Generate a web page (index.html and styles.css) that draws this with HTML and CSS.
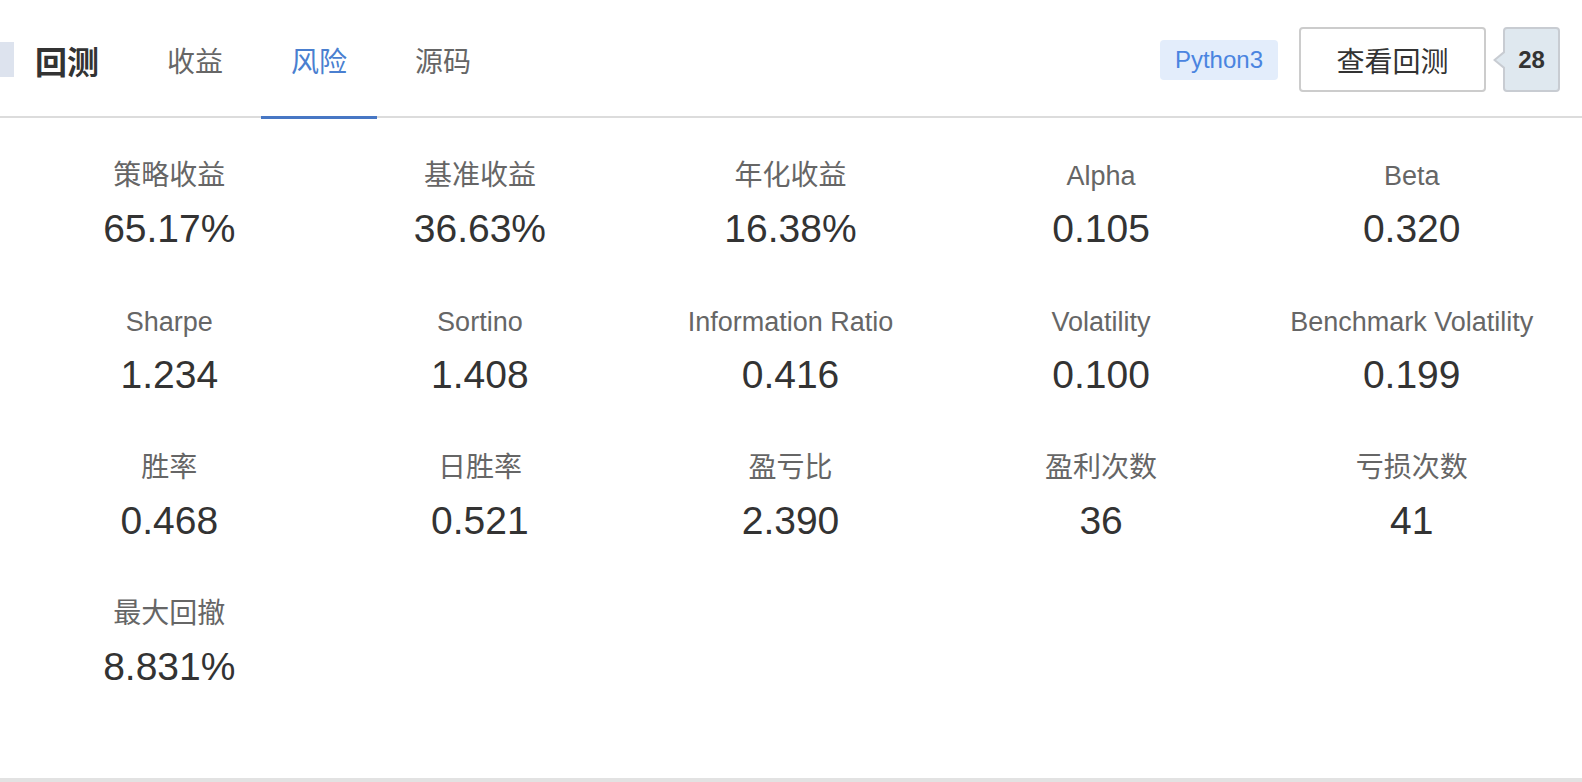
FILE: index.html
```html
<!DOCTYPE html>
<html lang="zh-CN">
<head>
<meta charset="utf-8">
<title>回测 - 风险</title>
<link rel="stylesheet" href="styles.css">
</head>
<body>
<div class="page">
  <header class="header">
    <div class="brand">
      <span class="brand-mark"></span>
      <h1 class="brand-title">回测</h1>
    </div>
    <nav class="tabs">
      <a class="tab">收益</a>
      <a class="tab tab-active">风险</a>
      <a class="tab">源码</a>
    </nav>
    <div class="actions">
      <span class="lang-badge">Python3</span>
      <button class="view-btn">查看回测</button>
      <span class="count">28</span>
    </div>
  </header>
  <main class="stats">
    <div class="stat"><div class="label label-cn">策略收益</div><div class="value">65.17%</div></div>
    <div class="stat"><div class="label label-cn">基准收益</div><div class="value">36.63%</div></div>
    <div class="stat"><div class="label label-cn">年化收益</div><div class="value">16.38%</div></div>
    <div class="stat"><div class="label">Alpha</div><div class="value">0.105</div></div>
    <div class="stat"><div class="label">Beta</div><div class="value">0.320</div></div>

    <div class="stat"><div class="label">Sharpe</div><div class="value">1.234</div></div>
    <div class="stat"><div class="label">Sortino</div><div class="value">1.408</div></div>
    <div class="stat"><div class="label">Information Ratio</div><div class="value">0.416</div></div>
    <div class="stat"><div class="label">Volatility</div><div class="value">0.100</div></div>
    <div class="stat"><div class="label">Benchmark Volatility</div><div class="value">0.199</div></div>

    <div class="stat"><div class="label label-cn">胜率</div><div class="value">0.468</div></div>
    <div class="stat"><div class="label label-cn">日胜率</div><div class="value">0.521</div></div>
    <div class="stat"><div class="label label-cn">盈亏比</div><div class="value">2.390</div></div>
    <div class="stat"><div class="label label-cn">盈利次数</div><div class="value">36</div></div>
    <div class="stat"><div class="label label-cn">亏损次数</div><div class="value">41</div></div>

    <div class="stat"><div class="label label-cn">最大回撤</div><div class="value">8.831%</div></div>
  </main>
  <div class="footer-line"></div>
</div>
</body>
</html>
```

FILE: styles.css
```css
* { box-sizing: border-box; }

html, body {
  margin: 0;
  padding: 0;
  background: #ffffff;
}

body {
  font-family: "Liberation Sans", "Noto Sans CJK SC", sans-serif;
  color: #333333;
}

.page {
  width: 1582px;
  height: 782px;
  overflow: hidden;
}

.header {
  display: flex;
  align-items: center;
  height: 118px;
  border-bottom: 2px solid #dcdcdc;
  padding-right: 22px;
}

.brand {
  display: flex;
  align-items: center;
  height: 100%;
  padding-top: 3px;
}

.brand-mark {
  width: 14px;
  height: 35px;
  background: #dde3ee;
  margin-right: 21px;
}

.brand-title {
  margin: 0 38px 0 0;
  font-size: 32px;
  font-weight: bold;
  color: #333333;
  font-family: "Noto Sans CJK SC", sans-serif;
  line-height: 1;
}

.tabs {
  display: flex;
  gap: 8px;
  align-self: stretch;
}

.tab {
  display: flex;
  align-items: center;
  justify-content: center;
  width: 116px;
  font-size: 28px;
  color: #666666;
  padding-top: 3px;
  margin-bottom: -3px;
  border-bottom: 3px solid transparent;
  font-family: "Noto Sans CJK SC", sans-serif;
}

.tab-active {
  color: #4a7fd0;
  border-bottom-color: #4777c4;
}

.actions {
  margin-left: auto;
  display: flex;
  align-items: center;
  padding-top: 3px;
}

.lang-badge {
  display: inline-flex;
  align-items: center;
  height: 40px;
  padding: 0 15px;
  background: #e3edfb;
  border-radius: 4px;
  color: #4a84e0;
  font-size: 24px;
  margin-right: 21px;
}

.view-btn {
  width: 187px;
  height: 65px;
  background: #ffffff;
  border: 2px solid #cccccc;
  border-radius: 4px;
  font-size: 28px;
  color: #333333;
  font-family: "Noto Sans CJK SC", sans-serif;
  padding: 0;
  margin-right: 17px;
}

.count {
  position: relative;
  display: inline-flex;
  align-items: center;
  justify-content: center;
  width: 57px;
  height: 65px;
  background: #dfe8ef;
  border: 2px solid #c8ccd2;
  border-radius: 4px;
  font-size: 24px;
  font-weight: bold;
  color: #333333;
}

.count::before {
  content: "";
  position: absolute;
  left: -12px;
  top: 50%;
  margin-top: -10px;
  border-style: solid;
  border-width: 10px 12px 10px 0;
  border-color: transparent #c8ccd2 transparent transparent;
}

.count::after {
  content: "";
  position: absolute;
  left: -9px;
  top: 50%;
  margin-top: -8px;
  border-style: solid;
  border-width: 8px 10px 8px 0;
  border-color: transparent #dfe8ef transparent transparent;
}

.stats {
  display: grid;
  grid-template-columns: repeat(5, 1fr);
  align-content: start;
  row-gap: 50px;
  padding: 40px 15px 0 14px;
  height: 660px;
}

.stat {
  text-align: center;
}

.label {
  font-size: 27px;
  line-height: 36px;
  height: 36px;
  color: #666666;
}

.label-cn {
  font-size: 28px;
}

.value {
  margin-top: 10px;
  font-size: 39px;
  line-height: 50px;
  color: #333333;
}

.footer-line {
  height: 4px;
  background: #e2e2e2;
}
```
